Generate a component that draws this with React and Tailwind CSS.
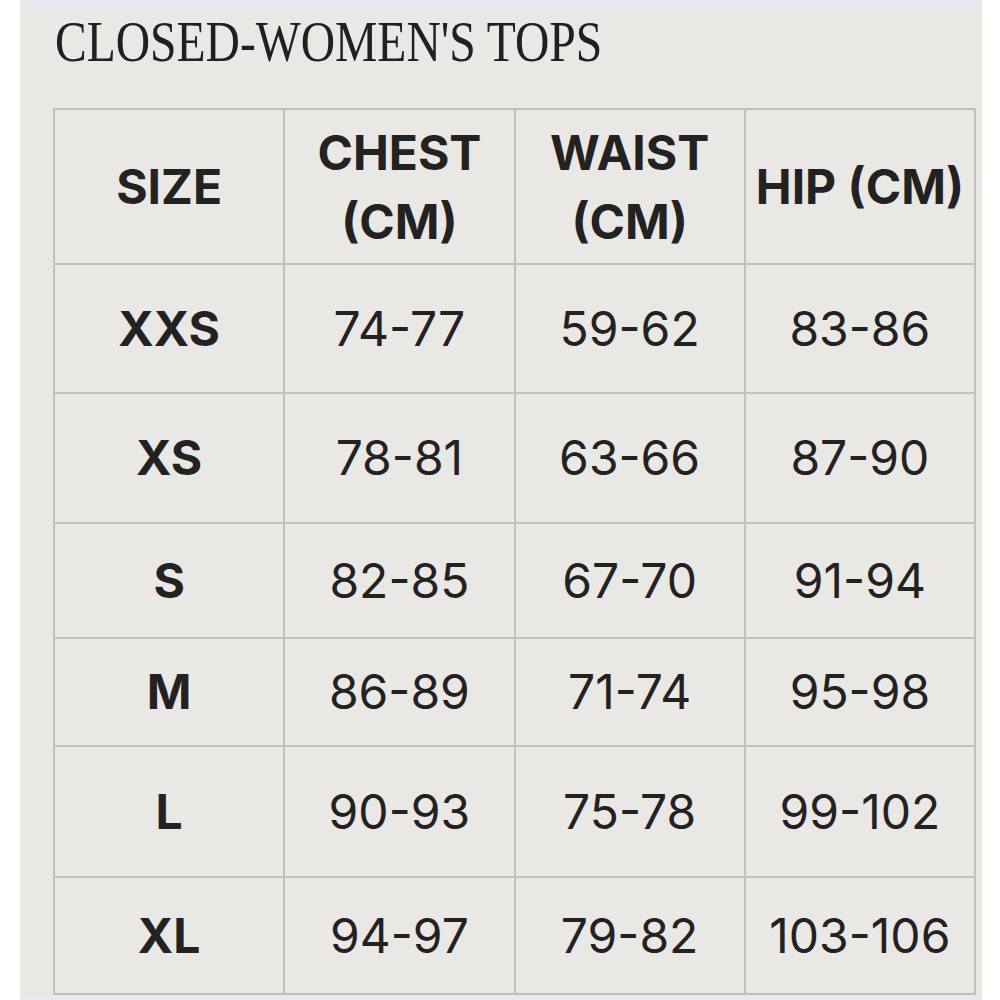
import React from "react";

const rows = [
  { size: "XXS", chest: "74-77", waist: "59-62", hip: "83-86", h: "h-[129px]" },
  { size: "XS", chest: "78-81", waist: "63-66", hip: "87-90", h: "h-[130px]" },
  { size: "S", chest: "82-85", waist: "67-70", hip: "91-94", h: "h-[115px]" },
  { size: "M", chest: "86-89", waist: "71-74", hip: "95-98", h: "h-[108px]" },
  { size: "L", chest: "90-93", waist: "75-78", hip: "99-102", h: "h-[131px]" },
  { size: "XL", chest: "94-97", waist: "79-82", hip: "103-106", h: "h-[117px]" },
];

export default function App() {
  return (
    <div className="w-[1000px] h-[1000px] bg-white overflow-hidden">
      <div className="ml-[20px] w-[962px] h-[1000px] bg-[#eae8e4] flex flex-col">
        <div className="h-[9px] bg-[#e8e9ee]" />
        <div className="h-[99px] pl-[35px] pt-[1px]">
          <div
            className="origin-left scale-x-[0.82] whitespace-nowrap text-[58px] leading-[64px] text-[#202020]"
            style={{ fontFamily: '"Liberation Serif", "Times New Roman", serif' }}
          >
            CLOSED-WOMEN'S TOPS
          </div>
        </div>
        <div className="pl-[33px]">
          <table
            className="border-collapse w-[923px] table-fixed text-[#222]"
            style={{ fontFamily: 'Inter, "Liberation Sans", Arial, sans-serif' }}
          >
            <tbody>
              <tr className="h-[155px]">
                {["SIZE", "CHEST (CM)", "WAIST (CM)", "HIP (CM)"].map((t, i) => (
                  <td
                    key={i}
                    className="border-2 border-[#c1c0bd] w-[230px] px-0 text-center align-middle font-bold text-[48px] leading-[69px] whitespace-nowrap"
                  >
                    {i === 1 ? (
                      <>CHEST<br />(CM)</>
                    ) : i === 2 ? (
                      <>WAIST<br />(CM)</>
                    ) : (
                      t
                    )}
                  </td>
                ))}
              </tr>
              {rows.map((r) => (
                <tr key={r.size} className={r.h}>
                  <td className="border-2 border-[#c1c0bd] text-center align-middle font-bold text-[48px]">
                    {r.size}
                  </td>
                  {[r.chest, r.waist, r.hip].map((v, i) => (
                    <td
                      key={i}
                      className="border-2 border-[#c1c0bd] text-center align-middle font-normal text-[48px]"
                    >
                      {v}
                    </td>
                  ))}
                </tr>
              ))}
            </tbody>
          </table>
        </div>
        <div className="flex-1 bg-[#e8e9ee] mt-[1px]" />
      </div>
    </div>
  );
}
